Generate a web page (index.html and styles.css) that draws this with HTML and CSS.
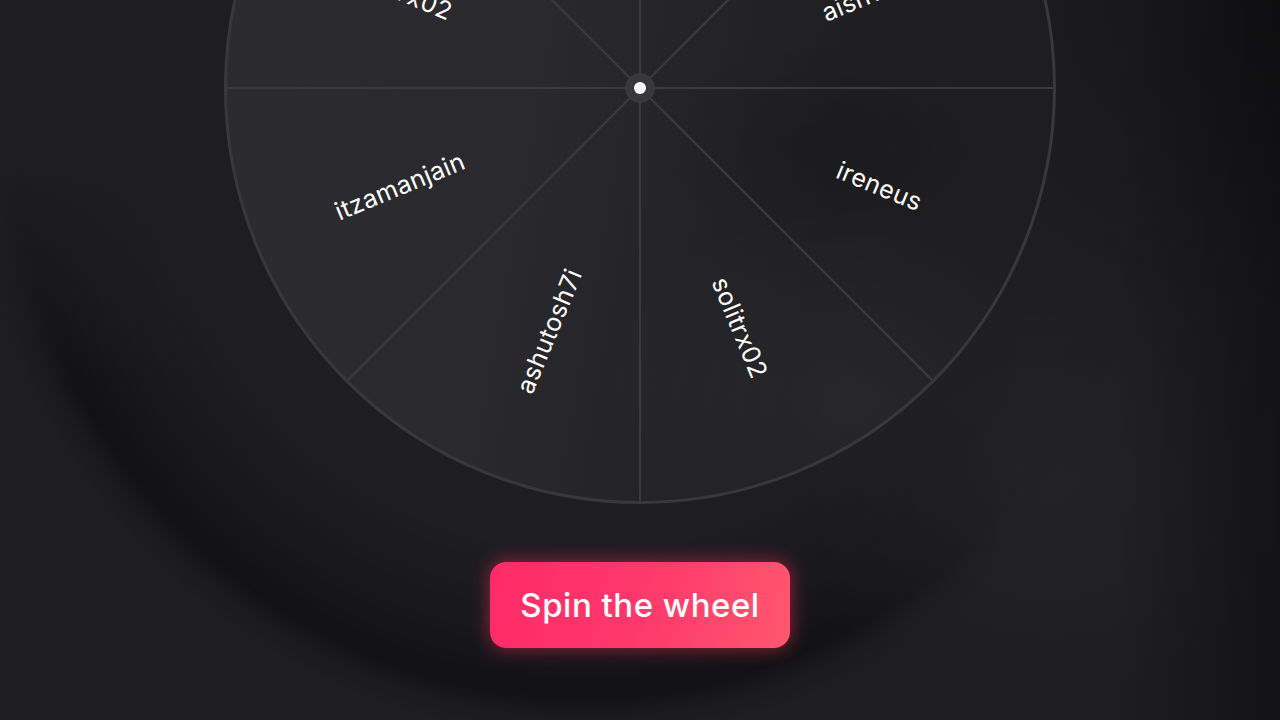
FILE: index.html
```html
<!DOCTYPE html>
<html lang="en">
<head>
<meta charset="utf-8">
<title>Spin the wheel</title>
<link rel="stylesheet" href="styles.css">
</head>
<body>
<main class="stage">
  <div class="wheel">
    <svg class="wheel-art" viewBox="0 0 832 832" width="832" height="832">
      <g class="spokes">
        <line x1="3" y1="416" x2="829" y2="416"/>
        <line x1="416" y1="3" x2="416" y2="829"/>
        <line x1="124" y1="124" x2="708" y2="708"/>
        <line x1="708" y1="124" x2="124" y2="708"/>
      </g>
      <g class="labels">
        <text transform="translate(655.5 514) rotate(22.5)">ireneus</text>
        <text transform="translate(516 655.5) rotate(67.5)">solitrx02</text>
        <text transform="translate(325 659) rotate(-67.5)">ashutosh7i</text>
        <text transform="translate(175.8 514) rotate(-22.5)">itzamanjain</text>
        <text transform="translate(178 320) rotate(22.5)">solitrx02</text>
        <text transform="translate(316.5 175.8) rotate(67.5)">ireneus</text>
        <text transform="translate(515.5 175.8) rotate(-67.5)">itzamanjain</text>
        <text transform="translate(656.2 318) rotate(-22.5)">aishwarya</text>
      </g>
      <circle class="hub" cx="416" cy="416" r="15"/>
      <circle class="pin" cx="416" cy="416" r="6"/>
    </svg>
  </div>
  <button class="spin-btn" type="button">Spin the wheel</button>
</main>
</body>
</html>
```

FILE: styles.css
```css
* { box-sizing: border-box; }

html, body {
  margin: 0;
  height: 100%;
}

body {
  width: 1280px;
  height: 720px;
  overflow: hidden;
  font-family: "Inter", "Noto Sans", "Liberation Sans", sans-serif;
  background-color: #1e1e21;
  background-image:
    linear-gradient(to right, rgba(0,0,0,0) 87%, rgba(0,0,0,0.36) 100%),
    radial-gradient(ellipse 380px 320px at 1280px 0px, rgba(0,0,0,0.28), rgba(0,0,0,0)),
    radial-gradient(ellipse 260px 230px at 1050px 480px, rgba(255,255,255,0.022), rgba(255,255,255,0)),
    linear-gradient(to bottom, rgba(30,30,33,0.96) 0, rgba(30,30,33,0.96) 170px, rgba(30,30,33,0) 390px),
    linear-gradient(to right, rgba(30,30,33,0) 0, rgba(30,30,33,0) 64%, rgba(30,30,33,0.96) 80%),
    radial-gradient(circle at 585px 125px, rgba(0,0,0,0) 0, rgba(0,0,0,0) 420px, rgba(0,0,0,0.2) 510px, rgba(0,0,0,0.42) 570px, rgba(0,0,0,0.12) 592px, rgba(0,0,0,0) 615px);
}

.stage {
  display: flex;
  flex-direction: column;
  align-items: center;
  gap: 58px;
  margin-top: -328px;
}

.wheel {
  position: relative;
  flex: none;
  width: 832px;
  height: 832px;
  border-radius: 50%;
  border: 3px solid #38383c;
  background:
    radial-gradient(ellipse 170px 110px at 72% 57%, rgba(0,0,0,0.14), rgba(0,0,0,0)),
    radial-gradient(ellipse 260px 200px at 76% 88%, rgba(255,255,255,0.04), rgba(255,255,255,0)),
    linear-gradient(100deg, #2c2c30 0%, #2a2a2e 38%, #242428 56%, #1f1f22 72%, #1d1d20 100%);
}

.wheel-art {
  position: absolute;
  top: -3px;
  left: -3px;
  display: block;
}

.spokes line {
  stroke: #3b3b3f;
  stroke-width: 2;
}

.labels text {
  fill: #ffffff;
  font-family: "Inter", "Noto Sans", "Liberation Sans", sans-serif;
  font-size: 25px;
  letter-spacing: 0.4px;
  font-weight: 400;
  text-anchor: middle;
  dominant-baseline: central;
}

.hub { fill: #38383c; }
.pin { fill: #ffffff; }

.spin-btn {
  flex: none;
  width: 300px;
  height: 86px;
  border: none;
  border-radius: 16px;
  background: linear-gradient(100deg, #fe2a67 0%, #ff3a6c 55%, #ff576f 100%);
  box-shadow: 0 0 18px 2px rgba(255, 45, 100, 0.45);
  color: #ffffff;
  font-family: "Inter", "Noto Sans", "Liberation Sans", sans-serif;
  font-size: 33px;
  letter-spacing: 0.5px;
  font-weight: 500;
  cursor: pointer;
  padding: 0;
}
```
